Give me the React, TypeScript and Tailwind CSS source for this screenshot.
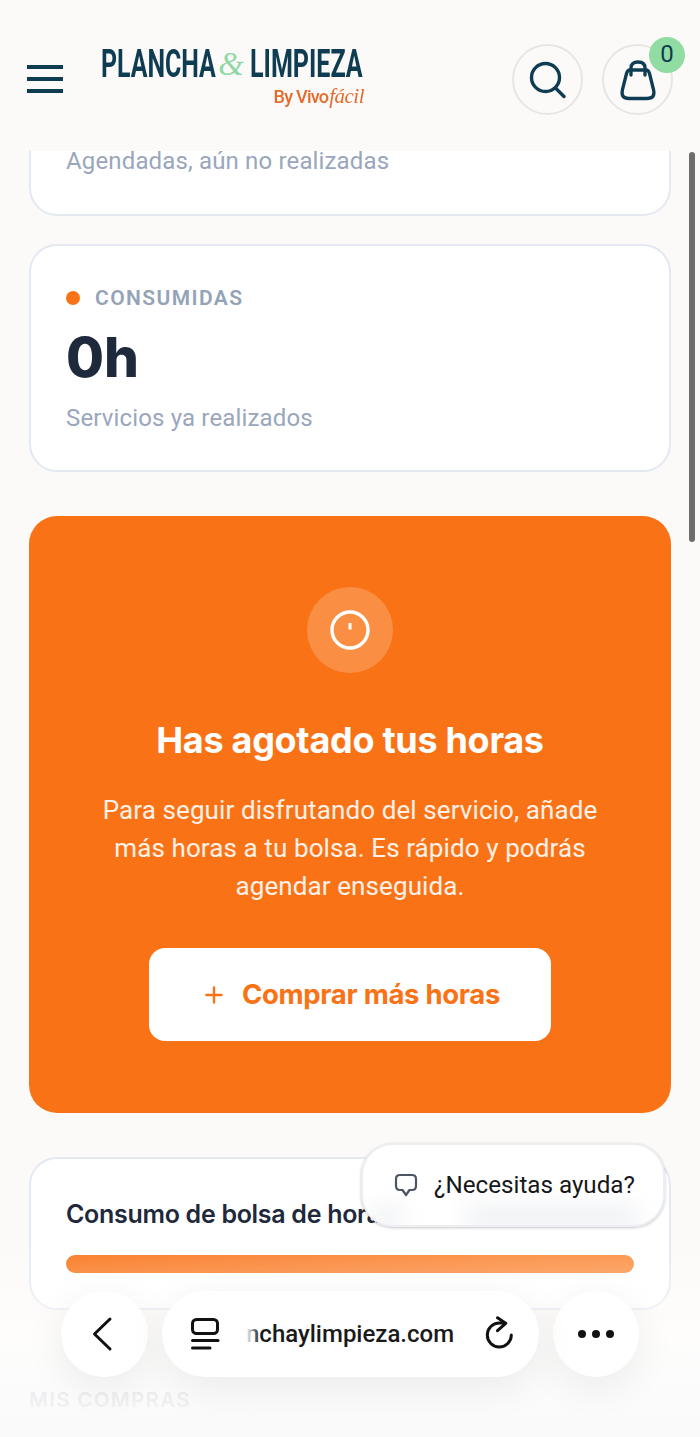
import React from "react";

const sans = "font-['Inter','Liberation_Sans',sans-serif]";
const body = "font-['Roboto','Liberation_Sans',sans-serif]";

function Header() {
  return (
    <header className="h-[151px] shrink-0 bg-[#fcfaf8] flex items-start pl-[27px] pr-[27px] relative z-10">
      <div className="mt-[65px] w-[36px] flex flex-col gap-[8px]">
        <div className="h-[4px] bg-[#0e3c52]" />
        <div className="h-[4px] bg-[#0e3c52]" />
        <div className="h-[4px] bg-[#0e3c52]" />
      </div>
      <div className="ml-[38px] mt-[44px] w-[263px] shrink-0">
        <div className="flex items-center h-[41px] text-[#0e3c52] font-['Roboto',sans-serif] font-bold text-[38px] leading-[41px]">
          <span className="w-[114px] whitespace-nowrap origin-left scale-x-[0.655] inline-block">PLANCHA</span>
          <span className="w-[35px] pr-[3px] text-center text-[#8fd8a5] font-['Liberation_Serif',serif] italic font-normal text-[33px]">&amp;</span>
          <span className="w-[114px] whitespace-nowrap origin-left scale-x-[0.66] inline-block">LIMPIEZA</span>
        </div>
        <div className="flex justify-end items-baseline text-[#e56b2c] h-[22px] leading-[22px] whitespace-nowrap origin-right scale-x-[0.95]">
          <span className="font-['Roboto',sans-serif] font-medium text-[19px] tracking-[-0.8px] mr-[1px]">By Vivo</span>
          <span className="font-['Liberation_Serif',serif] italic text-[22px] tracking-[-0.5px]">fácil</span>
        </div>
      </div>
      <div className="ml-auto mt-[44px] flex gap-[19px]">
        <div className="w-[71px] h-[71px] rounded-full border-2 border-[#e8e6e3] flex items-center justify-center">
          <svg width="40" height="40" viewBox="0 0 40 40" fill="none" stroke="#0e3c52" strokeWidth="3.4" strokeLinecap="round">
            <circle cx="17.5" cy="17.5" r="14" />
            <path d="M27.5 28 L36 36.5" />
          </svg>
        </div>
        <div className="w-[71px] h-[71px] rounded-full border-2 border-[#e8e6e3] flex items-center justify-center relative">
          <svg width="38" height="42" viewBox="0 0 38 42" fill="none" stroke="#0e3c52" strokeWidth="3.3" strokeLinecap="round" strokeLinejoin="round">
            <path d="M11 11 H27 Q29.5 11 30.5 14.5 L34.6 31 Q36.5 39.5 28 39.5 H10 Q1.5 39.5 3.4 31 L7.5 14.5 Q8.5 11 11 11 Z" />
            <path d="M12 16 V9 Q12 3 19 3 Q26 3 26 9 V16" />
          </svg>
          <span className={`absolute -right-[14px] -top-[9px] w-[36px] h-[36px] rounded-full bg-[#90dca2] text-[#0e3c52] text-[24px] flex items-center justify-center pb-[2px] ${body}`}>0</span>
        </div>
      </div>
    </header>
  );
}

function Card({ className = "", children }: { className?: string; children: React.ReactNode }) {
  return <section className={`bg-white border-2 border-[#e3e8f1] rounded-[28px] ${className}`}>{children}</section>;
}

export default function App() {
  return (
    <div className={`relative w-[700px] h-[1437px] overflow-hidden bg-[#fcfaf8] flex flex-col ${body}`}>
      <Header />
      <main className="flex-1 overflow-hidden px-[29px]">
        <section className="h-[65px] flex flex-col bg-white border-2 border-t-0 border-[#e3e8f1] rounded-b-[28px] px-[35px] mb-[28px]">
          <p className="text-[24px] leading-[28px] -mt-[4px] tracking-[0.15px] text-[#9aa6bc]">Agendadas, aún no realizadas</p>
        </section>

        <Card className="h-[228px] px-[35px] pt-[40px]">
          <div className="flex items-center gap-[15px]">
            <span className="w-[14px] h-[14px] rounded-full bg-[#f97316]" />
            <span className="text-[21px] leading-[24px] font-semibold tracking-[1.4px] text-[#94a3b8]">CONSUMIDAS</span>
          </div>
          <div className={`text-[55px] leading-[72px] font-extrabold text-[#1e293b] mt-[11px] ${sans}`}>0h</div>
          <p className="text-[24px] leading-[28px] tracking-[0.15px] text-[#9aa6bc] mt-[11px]">Servicios ya realizados</p>
        </Card>

        <section className="mt-[44px] h-[597px] rounded-[28px] bg-[#f97316] flex flex-col items-center pt-[71px]">
          <div className="w-[86px] h-[86px] rounded-full bg-white/20 flex items-center justify-center">
            <svg width="42" height="42" viewBox="0 0 42 42" fill="none" stroke="#fff" strokeWidth="3.4">
              <circle cx="21" cy="21" r="18" />
              <path d="M21 14 V20.5" strokeWidth="3" />
            </svg>
          </div>
          <h2 className={`mt-[42px] text-[36px] leading-[50px] font-bold text-white tracking-[-0.3px] ${sans}`}>Has agotado tus horas</h2>
          <p className="mt-[26px] w-[530px] text-center text-[26px] leading-[38px] tracking-[0.1px] text-white/90">
            Para seguir disfrutando del servicio, añade más horas a tu bolsa. Es rápido y podrás agendar enseguida.
          </p>
          <button className="mt-[43px] w-[402px] h-[93px] rounded-[16px] bg-white flex items-center justify-center gap-[18px] pl-[4px] text-[#f97316]">
            <svg width="20" height="20" viewBox="0 0 20 20" stroke="#f97316" strokeWidth="2.4" strokeLinecap="round">
              <path d="M10 2.5 V17.5 M2.5 10 H17.5" />
            </svg>
            <span className={`text-[27.5px] font-bold tracking-[-0.3px] ${sans}`}>Comprar más horas</span>
          </button>
        </section>

        <Card className="mt-[44px] h-[153px] px-[35px] pt-[38px]">
          <div className="flex items-center">
            <span className={`text-[25px] leading-[34px] font-semibold text-[#1e293b] tracking-[-0.3px] ${sans}`}>Consumo de bolsa de horas</span>
          </div>
          <div className="mt-[24px] h-[18px] rounded-full bg-gradient-to-r from-[#f97316] to-[#fb8f42]" />
        </Card>

        <p className={`mt-[78px] text-[20.5px] leading-[24px] font-semibold tracking-[1.3px] text-[#a3a9b5] ${sans}`}>MIS COMPRAS</p>
      </main>

      <div className="absolute left-[689px] top-[152px] w-[6px] h-[390px] rounded-full bg-[#6d6d6d]" />

      <div className="absolute left-0 right-0 bottom-0 h-[200px] bg-gradient-to-b from-white/0 via-white/60 to-[#fafafa]" />

      <div className="absolute left-[361px] top-[1143px] w-[304px] h-[84px] rounded-[32px] overflow-hidden bg-white border-2 border-[#eceef2] shadow-[0_1px_3px_rgba(0,0,0,0.22)] flex items-center pl-[30px] gap-[15px]">
        <div className="absolute left-[10px] bottom-[2px] w-[28px] h-[12px] bg-gray-400/30 blur-md" />
        <div className="absolute left-[104px] bottom-[2px] w-[170px] h-[12px] bg-gray-400/30 blur-md" />
        <svg className="relative" width="26" height="26" viewBox="0 0 26 26" fill="none" stroke="#4b5563" strokeWidth="2.2" strokeLinejoin="round">
          <path d="M7 3 H19 Q23 3 23 7 V14 Q23 18 19 18 H16.5 L13 23 L9.5 18 H7 Q3 18 3 14 V7 Q3 3 7 3 Z" />
        </svg>
        <span className="relative text-[24.2px] leading-[30px] text-[#171717] whitespace-nowrap">¿Necesitas ayuda?</span>
      </div>

      <nav className="absolute left-[61px] top-[1291px] flex gap-[14px]">
        <div className="w-[87px] h-[86px] rounded-full bg-white shadow-[0_10px_40px_rgba(0,0,0,0.07)] flex items-center justify-center pr-[6px]">
          <svg width="28" height="36" viewBox="0 0 28 36" fill="none" stroke="#111" strokeWidth="3" strokeLinecap="round" strokeLinejoin="round">
            <path d="M22 3 L6.5 18 L22 33" />
          </svg>
        </div>
        <div className="w-[377px] h-[86px] rounded-full bg-white shadow-[0_10px_40px_rgba(0,0,0,0.07)] flex items-center pl-[28px] relative">
          <svg width="30" height="36" viewBox="0 0 30 36" fill="none" stroke="#111" strokeWidth="3" strokeLinecap="round">
            <rect x="2.5" y="3.5" width="25" height="14" rx="4" />
            <path d="M2.5 24.5 H28" />
            <path d="M2.5 32 H20" />
          </svg>
          <span className="relative ml-[26px] text-[24px] font-medium text-[#1a1a1a] whitespace-nowrap">
            nchaylimpieza.com
            <span className="absolute left-0 top-0 bottom-0 w-[14px] bg-gradient-to-r from-white to-white/0" />
          </span>
          <svg className="ml-auto mr-[25px]" width="30" height="36" viewBox="0 0 30 36" fill="none" stroke="#111" strokeWidth="3" strokeLinecap="round" strokeLinejoin="round">
            <path d="M20 7 H15.3 A12 12 0 1 0 27.3 19" />
            <path d="M13.5 1.8 L21.7 7.3 L13.5 14.7" />
          </svg>
        </div>
        <div className="w-[86px] h-[86px] rounded-full bg-white shadow-[0_10px_40px_rgba(0,0,0,0.07)] flex items-center justify-center gap-[6px]">
          <span className="w-[8px] h-[8px] rounded-full bg-[#111]" />
          <span className="w-[8px] h-[8px] rounded-full bg-[#111]" />
          <span className="w-[8px] h-[8px] rounded-full bg-[#111]" />
        </div>
      </nav>
    </div>
  );
}
